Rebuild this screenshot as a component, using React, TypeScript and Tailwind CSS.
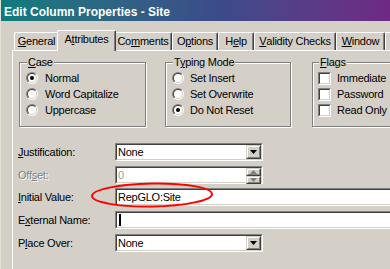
import React from 'react';

const Mn: React.FC<{ text: string; at: number }> = ({ text, at }) => (
  <>
    {text.slice(0, at)}
    <span className="underline underline-offset-[1px]">{text[at]}</span>
    {text.slice(at + 1)}
  </>
);

const Tab: React.FC<{ className: string; selected?: boolean; children?: React.ReactNode }> = ({
  className,
  selected,
  children,
}) => (
  <div
    className={
      selected
        ? `relative z-10 -mx-[2px] -mb-[1px] h-[21px] bg-[#d4d0c8] border-t border-l border-white border-r border-r-[#404040] rounded-t-[2px] shadow-[inset_-1px_0_0_#808080] flex items-center justify-center pb-[3px] ${className}`
        : `h-[18px] border-t border-l border-white border-r border-r-[#404040] rounded-t-[2px] shadow-[inset_-1px_0_0_#808080] flex items-center justify-center ${className}`
    }
  >
    {children}
  </div>
);

const Radio: React.FC<{ checked?: boolean }> = ({ checked }) => (
  <div className="w-[12px] h-[12px] rounded-full border border-t-[#808080] border-l-[#808080] border-b-white border-r-white">
    <div className="w-full h-full rounded-full border border-t-[#404040] border-l-[#404040] border-b-[#d4d0c8] border-r-[#d4d0c8] bg-white flex items-center justify-center">
      {checked && <div className="w-[4px] h-[4px] rounded-full bg-black" />}
    </div>
  </div>
);

const Check: React.FC = () => (
  <div className="w-[13px] h-[13px] border border-t-[#808080] border-l-[#808080] border-b-white border-r-white">
    <div className="w-full h-full border border-t-[#404040] border-l-[#404040] border-b-[#d4d0c8] border-r-[#d4d0c8] bg-white" />
  </div>
);

const Sunken: React.FC<{ className: string; children?: React.ReactNode }> = ({ className, children }) => (
  <div className={`h-[18px] border border-t-[#808080] border-l-[#808080] border-b-white border-r-white ${className}`}>
    <div className="h-full border border-t-[#404040] border-l-[#404040] border-b-[#d4d0c8] border-r-[#d4d0c8] bg-white flex items-center pl-[1px]">
      {children}
    </div>
  </div>
);

const RaisedBtn: React.FC<{ className?: string; children?: React.ReactNode }> = ({ className = '', children }) => (
  <div className={`border border-t-[#d4d0c8] border-l-[#d4d0c8] border-b-[#404040] border-r-[#404040] ${className}`}>
    <div className="w-full h-full border border-t-white border-l-white border-b-[#808080] border-r-[#808080] bg-[#d4d0c8] flex items-center justify-center">
      {children}
    </div>
  </div>
);

const DownArrow = () => (
  <svg width="7" height="4" viewBox="0 0 7 4">
    <polygon points="0,0 7,0 3.5,4" fill="#000" />
  </svg>
);

const Combo: React.FC<{ value: string }> = ({ value }) => (
  <Sunken className="w-[148px]">
    <span className="flex-1">{value}</span>
    <RaisedBtn className="w-[15px] h-full">
      <DownArrow />
    </RaisedBtn>
  </Sunken>
);

const Group: React.FC<{ label: React.ReactNode; className: string; labelPos: string; children: React.ReactNode }> = ({
  label,
  className,
  labelPos,
  children,
}) => (
  <div
    className={`relative h-[65px] border border-[#808080] shadow-[inset_1px_1px_0_#fff,1px_1px_0_#fff] pt-[7px] ${className}`}
  >
    <span className={`absolute -top-[7px] ${labelPos} px-[1px] bg-[#d4d0c8] leading-[13px]`}>{label}</span>
    {children}
  </div>
);

const Field: React.FC<{ label: React.ReactNode; className?: string; disabled?: boolean; children: React.ReactNode }> = ({
  label,
  className = '',
  disabled,
  children,
}) => (
  <div className={`flex items-center h-[18px] ${className}`}>
    <div className={`w-[97px] ${disabled ? 'text-[#808080] [text-shadow:1px_1px_0_#fff]' : ''}`}>{label}</div>
    {children}
  </div>
);

export default function App() {
  return (
    <div className="relative w-[390px] h-[269px] overflow-hidden bg-[#d4d0c8] text-black text-[11px] leading-[13px] tracking-[-0.25px] font-['Liberation_Sans',Arial,sans-serif]">
      <div className="w-[440px] h-full flex flex-col border-l border-l-[#e4e0d8]">
        {/* title bar */}
        <div className="h-[21px] shrink-0 pt-[3px] pl-[3px] flex items-center bg-gradient-to-r from-[#0b7c7c] via-[#3b4b8a] to-[#7a1482] text-white font-bold text-[12px] tracking-normal">
          Edit Column Properties - Site
        </div>

        {/* tabs */}
        <div className="mt-[11px] ml-[13px] flex items-end h-[18px] overflow-visible">
          <Tab className="w-[45px]"><Mn text="General" at={0} /></Tab>
          <Tab className="w-[59px]" selected><Mn text="Attributes" at={1} /></Tab>
          <Tab className="w-[58px]"><Mn text="Comments" at={2} /></Tab>
          <Tab className="w-[46px]"><Mn text="Options" at={1} /></Tab>
          <Tab className="w-[36px]"><Mn text="Help" at={1} /></Tab>
          <Tab className="w-[82px]"><Mn text="Validity Checks" at={0} /></Tab>
          <Tab className="w-[49px]"><Mn text="Window" at={0} /></Tab>
          <Tab className="w-[50px]" />
        </div>

        {/* panel */}
        <div className="flex-1 ml-[11px] border-t border-l border-white pt-[11px] pl-[6px]">
          <div className="flex">
            <Group label={<Mn text="Case" at={0} />} className="w-[127px] pl-[6px]" labelPos="left-[7px]">
              {[['Normal', true], ['Word Capitalize', false], ['Uppercase', false]].map(([t, c]) => (
                <div key={t as string} className="h-[16px] flex items-center gap-[7px]">
                  <Radio checked={c as boolean} />
                  <span>{t as string}</span>
                </div>
              ))}
            </Group>
            <Group label={<Mn text="Typing Mode" at={1} />} className="ml-[19px] w-[126px] pl-[6px]" labelPos="left-[7px]">
              {[['Set Insert', false], ['Set Overwrite', false], ['Do Not Reset', true]].map(([t, c]) => (
                <div key={t as string} className="h-[16px] flex items-center gap-[6px]">
                  <Radio checked={c as boolean} />
                  <span>{t as string}</span>
                </div>
              ))}
            </Group>
            <Group label={<Mn text="Flags" at={0} />} className="ml-[21px] w-[120px] pl-[5px]" labelPos="left-[6px]">
              {['Immediate', 'Password', 'Read Only'].map(t => (
                <div key={t} className="h-[16px] flex items-center gap-[6px]">
                  <Check />
                  <span>{t}</span>
                </div>
              ))}
            </Group>
          </div>

          <div className="-ml-[1px] mt-[16px]">
            <Field label={<Mn text="Justification:" at={0} />}>
              <Combo value="None" />
            </Field>
            <Field label={<Mn text="Offset:" at={3} />} className="mt-[5px]" disabled>
              <Sunken className="w-[148px]">
                <span className="flex-1 text-[#a09a8c]">0</span>
                <div className="w-[15px] h-full flex flex-col">
                  <RaisedBtn className="flex-1">
                    <svg width="7" height="4" viewBox="0 0 7 4">
                      <polygon points="3.5,0 7,4 0,4" fill="#808080" />
                    </svg>
                  </RaisedBtn>
                  <RaisedBtn className="flex-1">
                    <svg width="7" height="4" viewBox="0 0 7 4">
                      <polygon points="0,0 7,0 3.5,4" fill="#808080" />
                    </svg>
                  </RaisedBtn>
                </div>
              </Sunken>
            </Field>
            <Field label={<Mn text="Initial Value:" at={0} />} className="mt-[4px]">
              <Sunken className="w-[300px]">RepGLO:Site</Sunken>
            </Field>
            <Field label={<Mn text="External Name:" at={1} />} className="mt-[5px]">
              <Sunken className="w-[300px]">
                <span className="w-[2px] h-[12px] bg-black ml-[1px]" />
              </Sunken>
            </Field>
            <Field label={<Mn text="Place Over:" at={1} />} className="mt-[5px]">
              <Combo value="None" />
            </Field>
          </div>
        </div>
      </div>

      {/* red annotation ellipse */}
      <svg className="absolute left-0 top-0 pointer-events-none" width="390" height="269">
        <ellipse cx="152" cy="195" rx="60" ry="11.5" fill="none" stroke="#ff0000" strokeWidth="2" transform="rotate(-1 152 195)" />
      </svg>
    </div>
  );
}
